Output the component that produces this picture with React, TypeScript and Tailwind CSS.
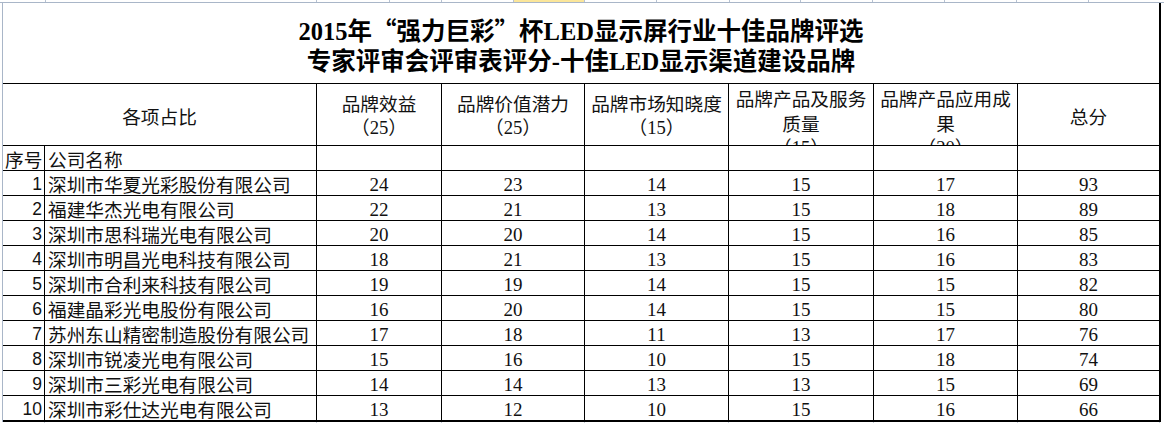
import React from "react";

const rows: [number, string, number[]][] = [
  [1, "深圳市华夏光彩股份有限公司", [24, 23, 14, 15, 17, 93]],
  [2, "福建华杰光电有限公司", [22, 21, 13, 15, 18, 89]],
  [3, "深圳市思科瑞光电有限公司", [20, 20, 14, 15, 16, 85]],
  [4, "深圳市明昌光电科技有限公司", [18, 21, 13, 15, 16, 83]],
  [5, "深圳市合利来科技有限公司", [19, 19, 14, 15, 15, 82]],
  [6, "福建晶彩光电股份有限公司", [16, 20, 14, 15, 15, 80]],
  [7, "苏州东山精密制造股份有限公司", [17, 18, 11, 13, 17, 76]],
  [8, "深圳市锐凌光电有限公司", [15, 16, 10, 15, 18, 74]],
  [9, "深圳市三彩光电有限公司", [14, 14, 13, 13, 15, 69]],
  [10, "深圳市彩仕达光电有限公司", [13, 12, 10, 15, 16, 66]],
];

const topSegs = [
  "w-[46px] bg-white",
  "w-[271px] bg-white",
  "w-[73px] bg-white",
  "w-[52px] bg-white",
  "w-[72px] bg-white",
  "w-[71px] bg-[#fbe69a]",
  "w-[72px] bg-white",
  "w-[73px] bg-white",
  "w-[71px] bg-white",
  "w-[72px] bg-white",
  "w-[72px] bg-white",
  "w-[72px] bg-white",
  "w-[72px] bg-white",
];
const botSegs = [
  "w-[45px]",
  "w-[272px]",
  "w-[125px]",
  "w-[143px]",
  "w-[144px]",
  "w-[145px]",
  "w-[144px]",
  "w-[142px]",
];

const SERIF = "font-[family-name:Liberation_Serif,Noto_Sans_CJK_SC,serif]";
const CJK = "font-[family-name:Noto_Sans_CJK_SC,Liberation_Sans,sans-serif]";
const SANS = "font-[family-name:Liberation_Sans,Noto_Sans_CJK_SC,sans-serif]";

function HeadCell({ a, b, pt }: { a: string; b: string; pt: string }) {
  return (
    <div className={`bg-white h-[61px] overflow-hidden text-center text-[18.67px] leading-[25px] text-[#111] px-[2px] ${pt}`}>
      <div className={CJK}>{a}</div>
      <div className={SERIF}>（{b}）</div>
    </div>
  );
}

function Q({ c }: { c: string }) {
  return <span className={CJK}>{c}</span>;
}

export default function App() {
  return (
    <div className="w-[1164px] h-[423px] overflow-hidden bg-white text-black">
      {/* strip of the row above */}
      <div className="flex h-[3px] border-b border-[#a9b6c8]">
        {topSegs.map((c, i) => (
          <div key={i} className={`h-full border-r border-[#b7c2d2] ${c}`} />
        ))}
        <div className="flex-1" />
      </div>

      <div className="flex">
        <div className="w-[2px]" />
        <div className="w-px bg-[#a9b6c8]" />
        <div className="grid grid-cols-[41px_271px_124px_142px_143px_144px_143px_141px] gap-px bg-black border-r-2 border-b-2 border-black">
          {/* title */}
          <div
            className={`col-span-8 bg-white h-[80px] pt-[12px] text-center text-[24.5px] leading-[30px] font-bold text-black ${SERIF}`}
          >
            <div>
              2015年<Q c="“" />强力巨彩<Q c="”" />杯LED显示屏行业十佳品牌评选
            </div>
            <div>专家评审会评审表评分-十佳LED显示渠道建设品牌</div>
          </div>

          {/* header */}
          <div
            className={`col-span-2 bg-white h-[61px] flex items-center justify-center pt-[2px] text-[18.67px] text-[#111] ${CJK}`}
          >
            各项占比
          </div>
          <HeadCell a="品牌效益" b="25" pt="pt-[6px]" />
          <HeadCell a="品牌价值潜力" b="25" pt="pt-[6px]" />
          <HeadCell a="品牌市场知晓度" b="15" pt="pt-[6px]" />
          <HeadCell a="品牌产品及服务质量" b="15" pt="pt-[1px]" />
          <HeadCell a="品牌产品应用成果" b="20" pt="pt-[1px]" />
          <div
            className={`bg-white h-[61px] flex items-center justify-center pt-[2px] text-[18.67px] text-[#111] ${CJK}`}
          >
            总分
          </div>

          {/* 序号 row */}
          <div
            className={`bg-white h-[24px] pl-[2px] pt-px text-[18.67px] leading-[24px] whitespace-nowrap overflow-hidden text-[#111] ${CJK}`}
          >
            序号
          </div>
          <div className={`bg-white h-[24px] pl-[3px] pt-px text-[18.67px] leading-[24px] text-[#111] ${CJK}`}>
            公司名称
          </div>
          {[0, 1, 2, 3, 4, 5].map((i) => (
            <div key={i} className="bg-white h-[24px]" />
          ))}

          {rows.map(([n, name, vals]) => (
            <React.Fragment key={n}>
              <div
                className={`bg-white h-[24px] pr-[2px] pt-px text-right text-[17.5px] leading-[24px] text-[#111] ${SANS}`}
              >
                {n}
              </div>
              <div
                className={`bg-white h-[24px] pl-[3px] pt-px text-[18.67px] leading-[24px] whitespace-nowrap overflow-hidden text-[#111] ${CJK}`}
              >
                {name}
              </div>
              {vals.map((v, i) => (
                <div
                  key={i}
                  className={`bg-white h-[24px] pt-[2px] text-center text-[19px] leading-[24px] overflow-hidden text-[#111] ${SERIF}`}
                >
                  {v}
                </div>
              ))}
            </React.Fragment>
          ))}
        </div>
        <div className="flex-1" />
      </div>

      {/* strip of the row below */}
      <div className="flex h-[2px]">
        {botSegs.map((c, i) => (
          <div key={i} className={`h-full border-r border-[#c3ccd9] bg-white ${c}`} />
        ))}
        <div className="flex-1" />
      </div>
    </div>
  );
}
